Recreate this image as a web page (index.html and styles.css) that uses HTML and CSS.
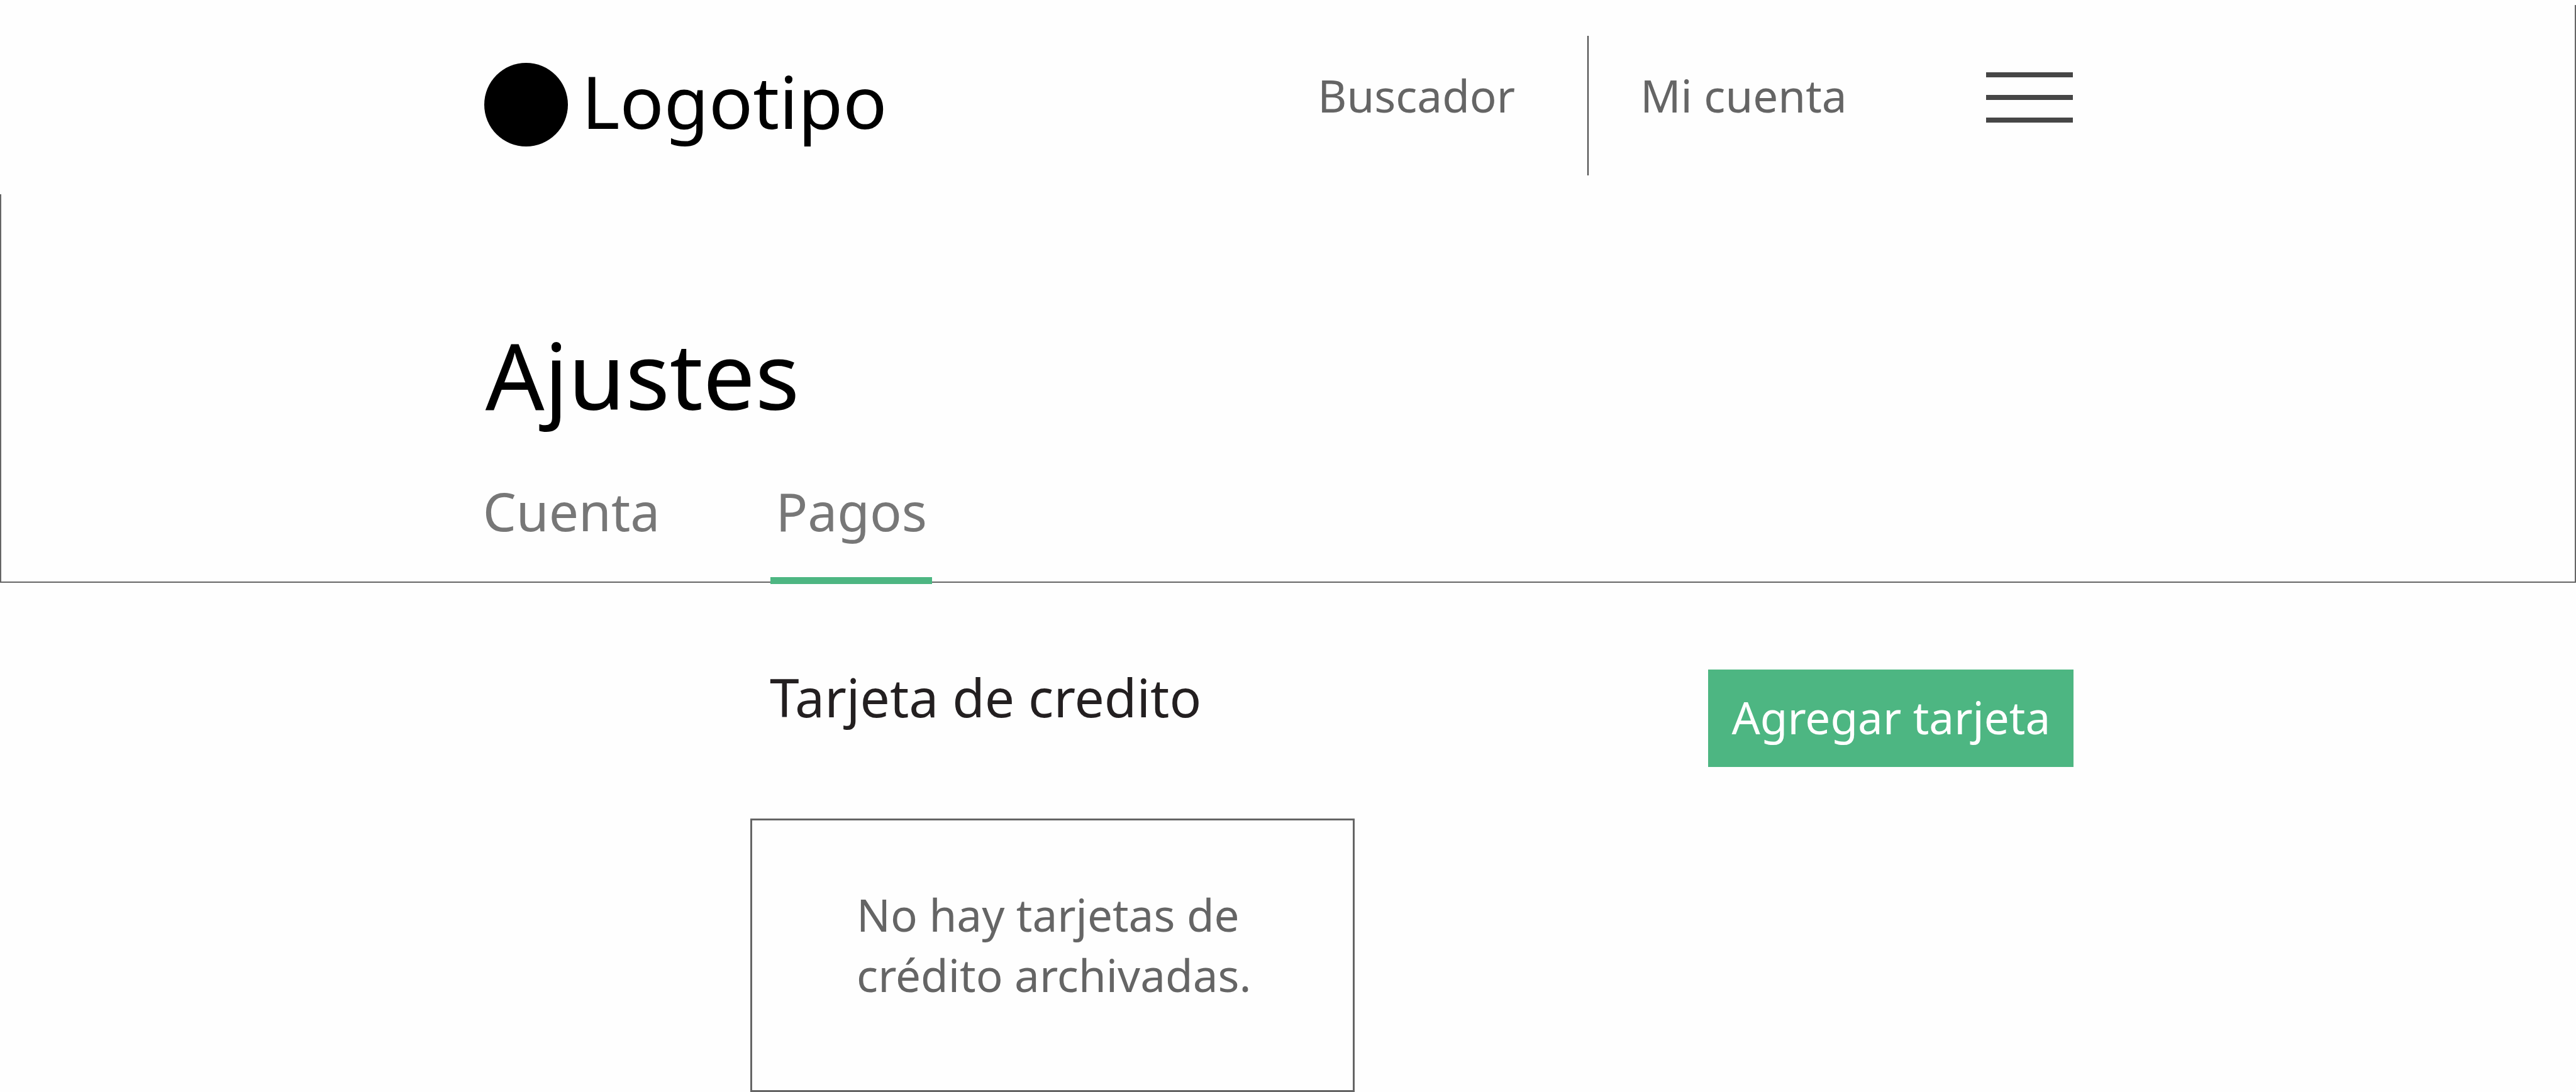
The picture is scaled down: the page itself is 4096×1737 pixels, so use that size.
FILE: index.html
```html
<!DOCTYPE html>
<html lang="es">
<head>
  <meta charset="utf-8">
  <meta name="viewport" content="width=device-width, initial-scale=1">
  <title>Ajustes – Pagos</title>
  <link rel="stylesheet" href="styles.css">
</head>
<body>
  <div class="masthead">
    <header class="topbar gutter">
      <a class="logo" href="#">
        <span class="logo-mark"></span>
        <span class="logo-name">Logotipo</span>
      </a>
      <nav class="topnav" aria-label="Principal">
        <a class="topnav-link" href="#">Buscador</a>
        <a class="topnav-link topnav-account" href="#">Mi cuenta</a>
        <button class="menu-button" type="button" aria-label="Menú">
          <span class="menu-bar"></span>
          <span class="menu-bar"></span>
          <span class="menu-bar"></span>
        </button>
      </nav>
    </header>

    <section class="settings gutter">
      <h1 class="settings-title">Ajustes</h1>
      <nav class="tabs" aria-label="Ajustes">
        <a class="tab" href="#">Cuenta</a>
        <a class="tab tab-active" href="#" aria-current="page">Pagos</a>
      </nav>
    </section>
  </div>

  <main class="gutter">
    <section class="payments">
      <div class="payments-head">
        <h2 class="payments-title">Tarjeta de credito</h2>
        <button class="add-button" type="button">Agregar tarjeta</button>
      </div>
      <div class="empty-card">
        <p class="empty-text">No hay tarjetas de crédito archivadas.</p>
      </div>
    </section>
  </main>
</body>
</html>
```
FILE: styles.css
```css
:root {
  --green: #4db682;
  --text: #656565;
  --line: #656565;
  --size-s: 71px;
  --size-m: 84px;
  --size-l: 116px;
  --size-xl: 147px;
}

* {
  box-sizing: border-box;
}

body {
  margin: 0;
  padding-top: 8px;
  background: #fefefe;
  color: var(--text);
  font-family: "Noto Sans", "Open Sans", sans-serif;
  font-size: var(--size-s);
  line-height: 96px;
}

h1,
h2,
p {
  margin: 0;
  font-weight: 400;
}

a {
  color: inherit;
  text-decoration: none;
}

button {
  border: 0;
  font: inherit;
  cursor: pointer;
}

.gutter {
  padding-left: 18.8%;
  padding-right: 19.5%;
}

/* Header and settings block share the line on the right */
.masthead {
  border-right: 2px solid var(--line);
}

.topbar {
  display: flex;
  justify-content: space-between;
  align-items: flex-start;
  padding-top: 49px;
  padding-bottom: 30px;
}

.logo {
  display: flex;
  gap: 22px;
  margin-top: 43px;
  color: #000;
  font-size: var(--size-l);
  line-height: 120px;
}

.logo-mark {
  width: 133px;
  height: 133px;
  border-radius: 50%;
  background: #000;
}

.topnav {
  display: flex;
  align-items: flex-start;
}

.topnav-link {
  padding: 47px 0 79px;
}

.topnav-account {
  margin-left: 115px;
  padding-left: 82px;
  border-left: 2px solid #464646;
}

.menu-button {
  display: flex;
  flex-direction: column;
  gap: 28px;
  width: 138px;
  margin-top: 58px;
  margin-left: 221px;
  padding: 0;
  background: none;
}

.menu-bar {
  width: 100%;
  height: 8px;
  background: #464646;
}

.settings {
  border-left: 2px solid var(--line);
  border-bottom: 2px solid var(--line);
  padding-top: 198px;
}

.settings-title {
  color: #000;
  font-size: var(--size-xl);
  line-height: 176px;
}

.tabs {
  display: flex;
  gap: 168px;
  margin: 86px 0 -4px -12px;
  color: #777;
  font-size: var(--size-m);
  line-height: 88px;
}

.tab {
  padding: 0 8px 61px;
  border-bottom: 11px solid transparent;
}

.tab-active {
  border-bottom-color: var(--green);
}

.payments {
  padding: 138px 0 0 423px;
}

.payments-head {
  display: flex;
  justify-content: space-between;
  align-items: flex-start;
  padding-left: 31px;
}

.payments-title {
  color: #231f20;
  font-size: var(--size-m);
  line-height: 88px;
}

.add-button {
  padding: 28px 37px 31px;
  background: var(--green);
  color: #fff;
}

.empty-card {
  max-width: 961px;
  margin-top: 82px;
  padding: 102px 130px 135px 166px;
  border: 3px solid var(--line);
}
```
